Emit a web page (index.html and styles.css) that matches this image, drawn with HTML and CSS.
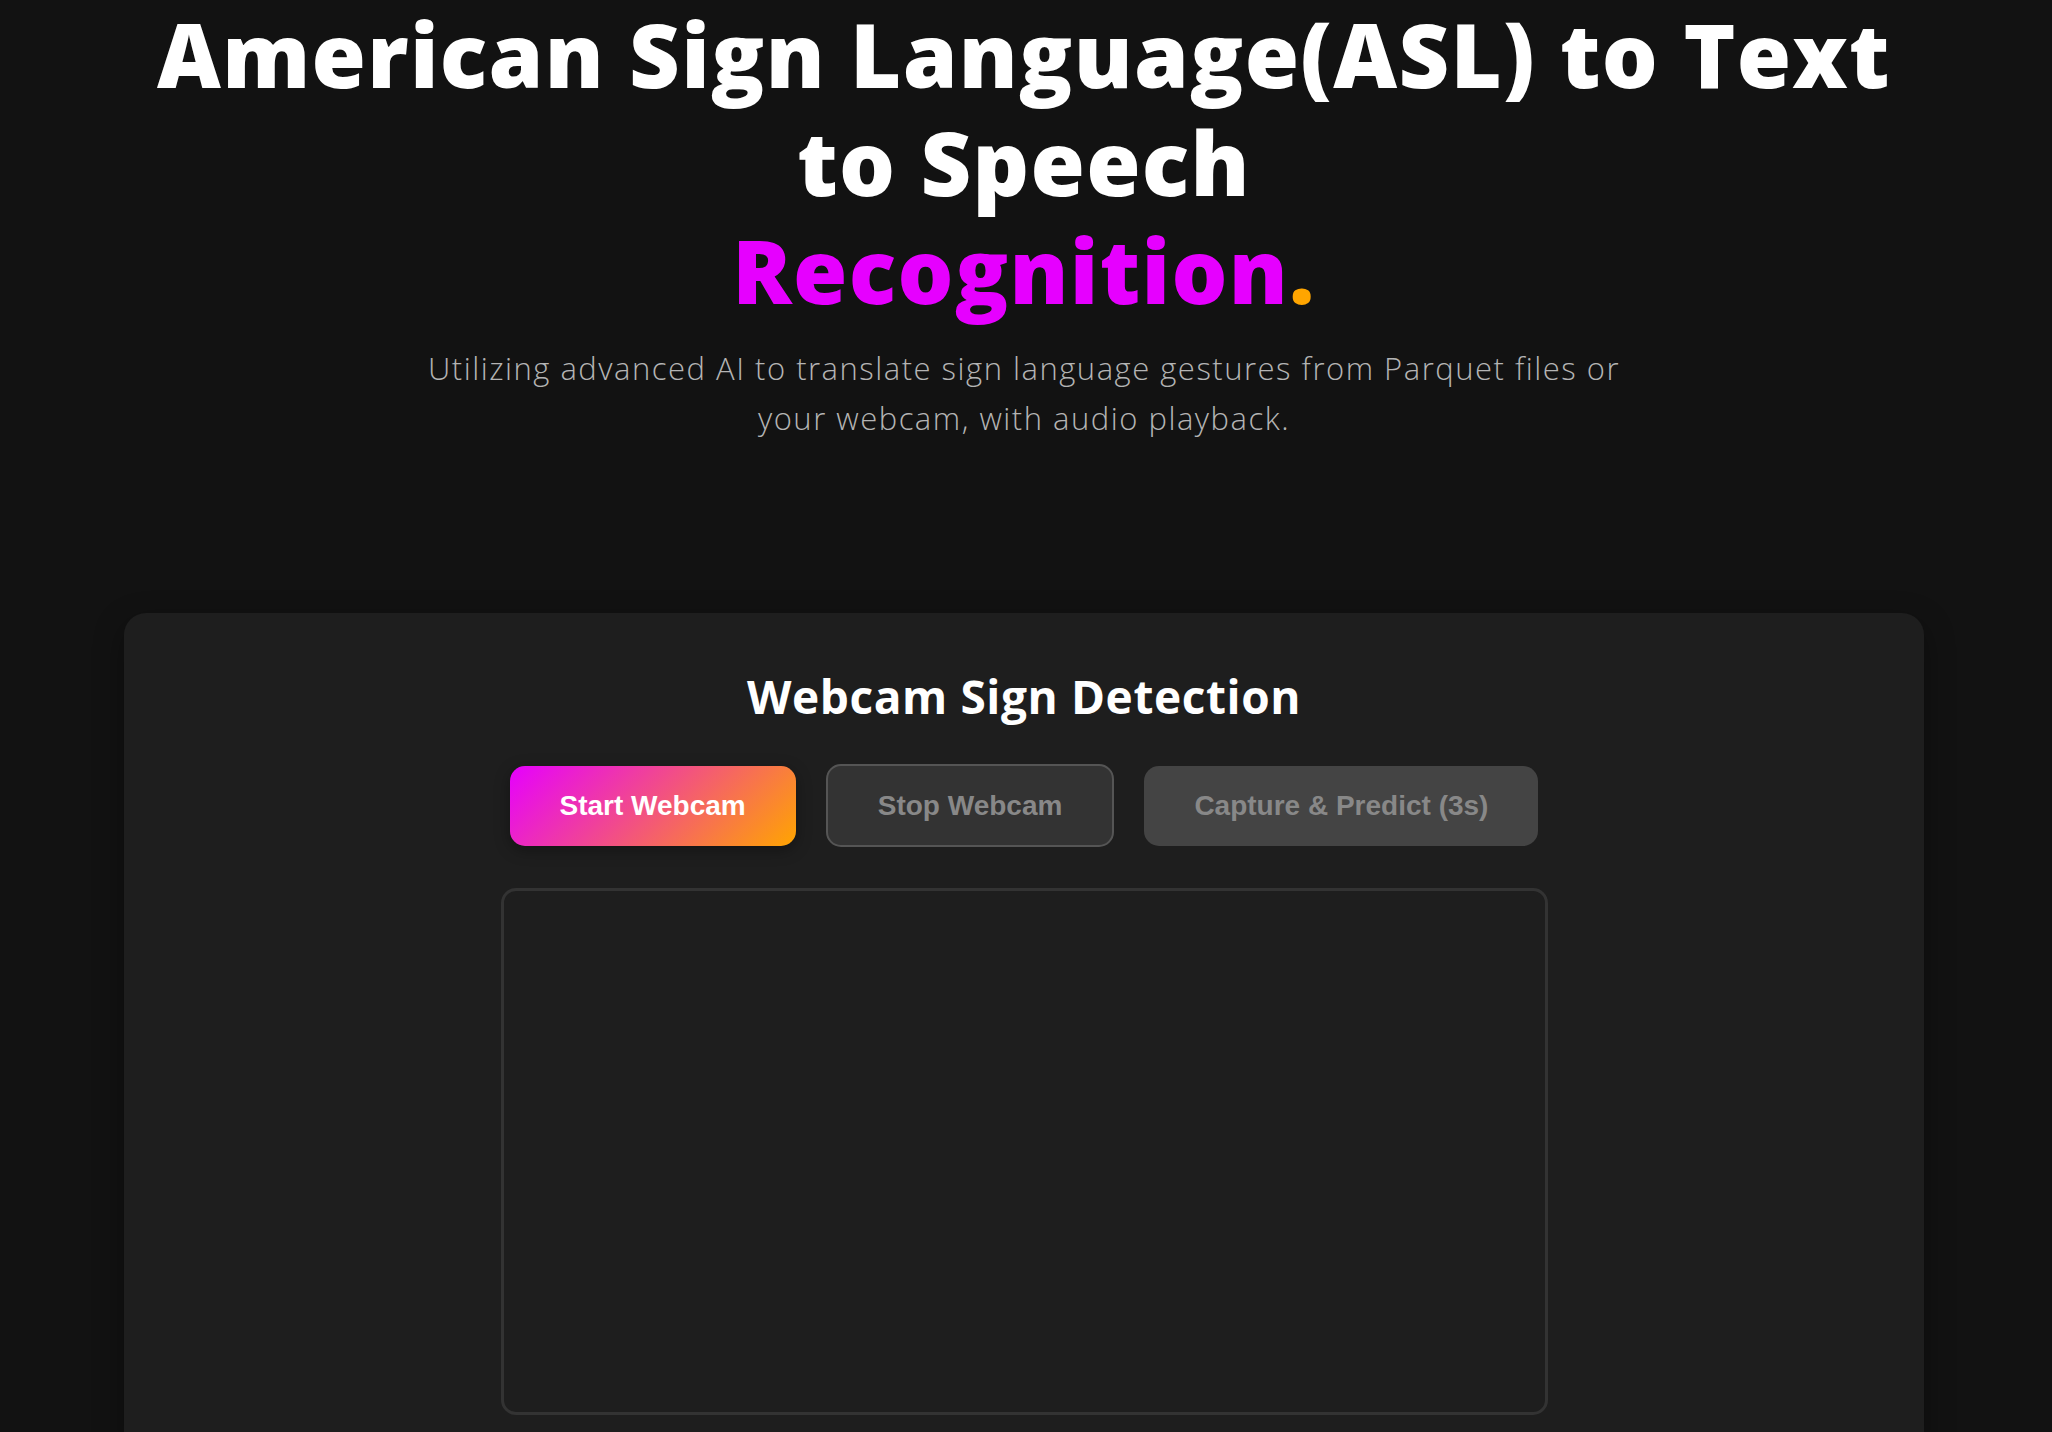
FILE: index.html
```html
<!DOCTYPE html>
<html lang="en">
<head>
<meta charset="utf-8">
<title>ASL to Text to Speech Recognition</title>
<link rel="stylesheet" href="styles.css">
</head>
<body>
<header class="hero">
  <h1 class="hero-title">American Sign Language(ASL) to Text<br>to Speech<br><span class="accent">Recognition</span><span class="dot">.</span></h1>
  <p class="hero-sub">Utilizing advanced AI to translate sign language gestures from Parquet files or your webcam, with audio playback.</p>
</header>
<main class="card">
  <h2 class="card-title">Webcam Sign Detection</h2>
  <div class="controls">
    <button class="btn btn-start">Start Webcam</button>
    <button class="btn btn-stop">Stop Webcam</button>
    <button class="btn btn-capture">Capture &amp; Predict (3s)</button>
  </div>
  <div class="video-box"></div>
</main>
</body>
</html>
```
FILE: styles.css
```css
* { box-sizing: border-box; }
html, body { margin: 0; padding: 0; }
body {
  background: #121212;
  color: #fff;
  font-family: "Open Sans", "Lato", sans-serif;
  overflow: hidden;
  padding-right: 4px;
}
.hero {
  text-align: center;
}
.hero-title {
  margin: 0;
  font-size: 88px;
  line-height: 108px;
  font-weight: 800;
  letter-spacing: 1.3px;
  color: #fff;
}
.accent { color: #e600ff; }
.dot { color: #ffa500; }
.hero-sub {
  margin: 19px auto 0;
  max-width: 1230px;
  font-size: 31px;
  line-height: 50px;
  font-weight: 300;
  letter-spacing: 1.5px;
  color: #b4b4b4;
}
.card {
  width: 1800px;
  margin: 170px auto 0;
  background: #1e1e1e;
  border-radius: 22px;
  padding: 56px 0 40px;
  box-shadow: 0 10px 30px rgba(0,0,0,0.35);
  display: flex;
  flex-direction: column;
  align-items: center;
}
.card-title {
  margin: 0;
  font-size: 46px;
  line-height: 55px;
  font-weight: 700;
  letter-spacing: 0.6px;
  color: #fff;
}
.controls {
  margin-top: 40px;
  display: flex;
  align-items: center;
  gap: 30px;
}
.btn {
  font-family: "Liberation Sans", Arial, sans-serif;
  font-weight: 700;
  font-size: 28px;
  line-height: 32px;
  padding: 24px 50px;
  border: none;
  border-radius: 15px;
}
.btn-start {
  color: #fff;
  background: linear-gradient(135deg, #e600ff 0%, #ffa500 100%);
  box-shadow: 0 4px 15px rgba(0,0,0,0.35);
}
.btn-stop {
  color: #888;
  background: #333;
  border: 2px solid #555;
  padding: 23.5px 50px;
}
.btn-capture {
  color: #888;
  background: #444;
}
.video-box {
  margin-top: 41px;
  width: 1047px;
  height: 527px;
  border: 3px solid #333;
  border-radius: 15px;
  background: #1e1e1e;
}
```
